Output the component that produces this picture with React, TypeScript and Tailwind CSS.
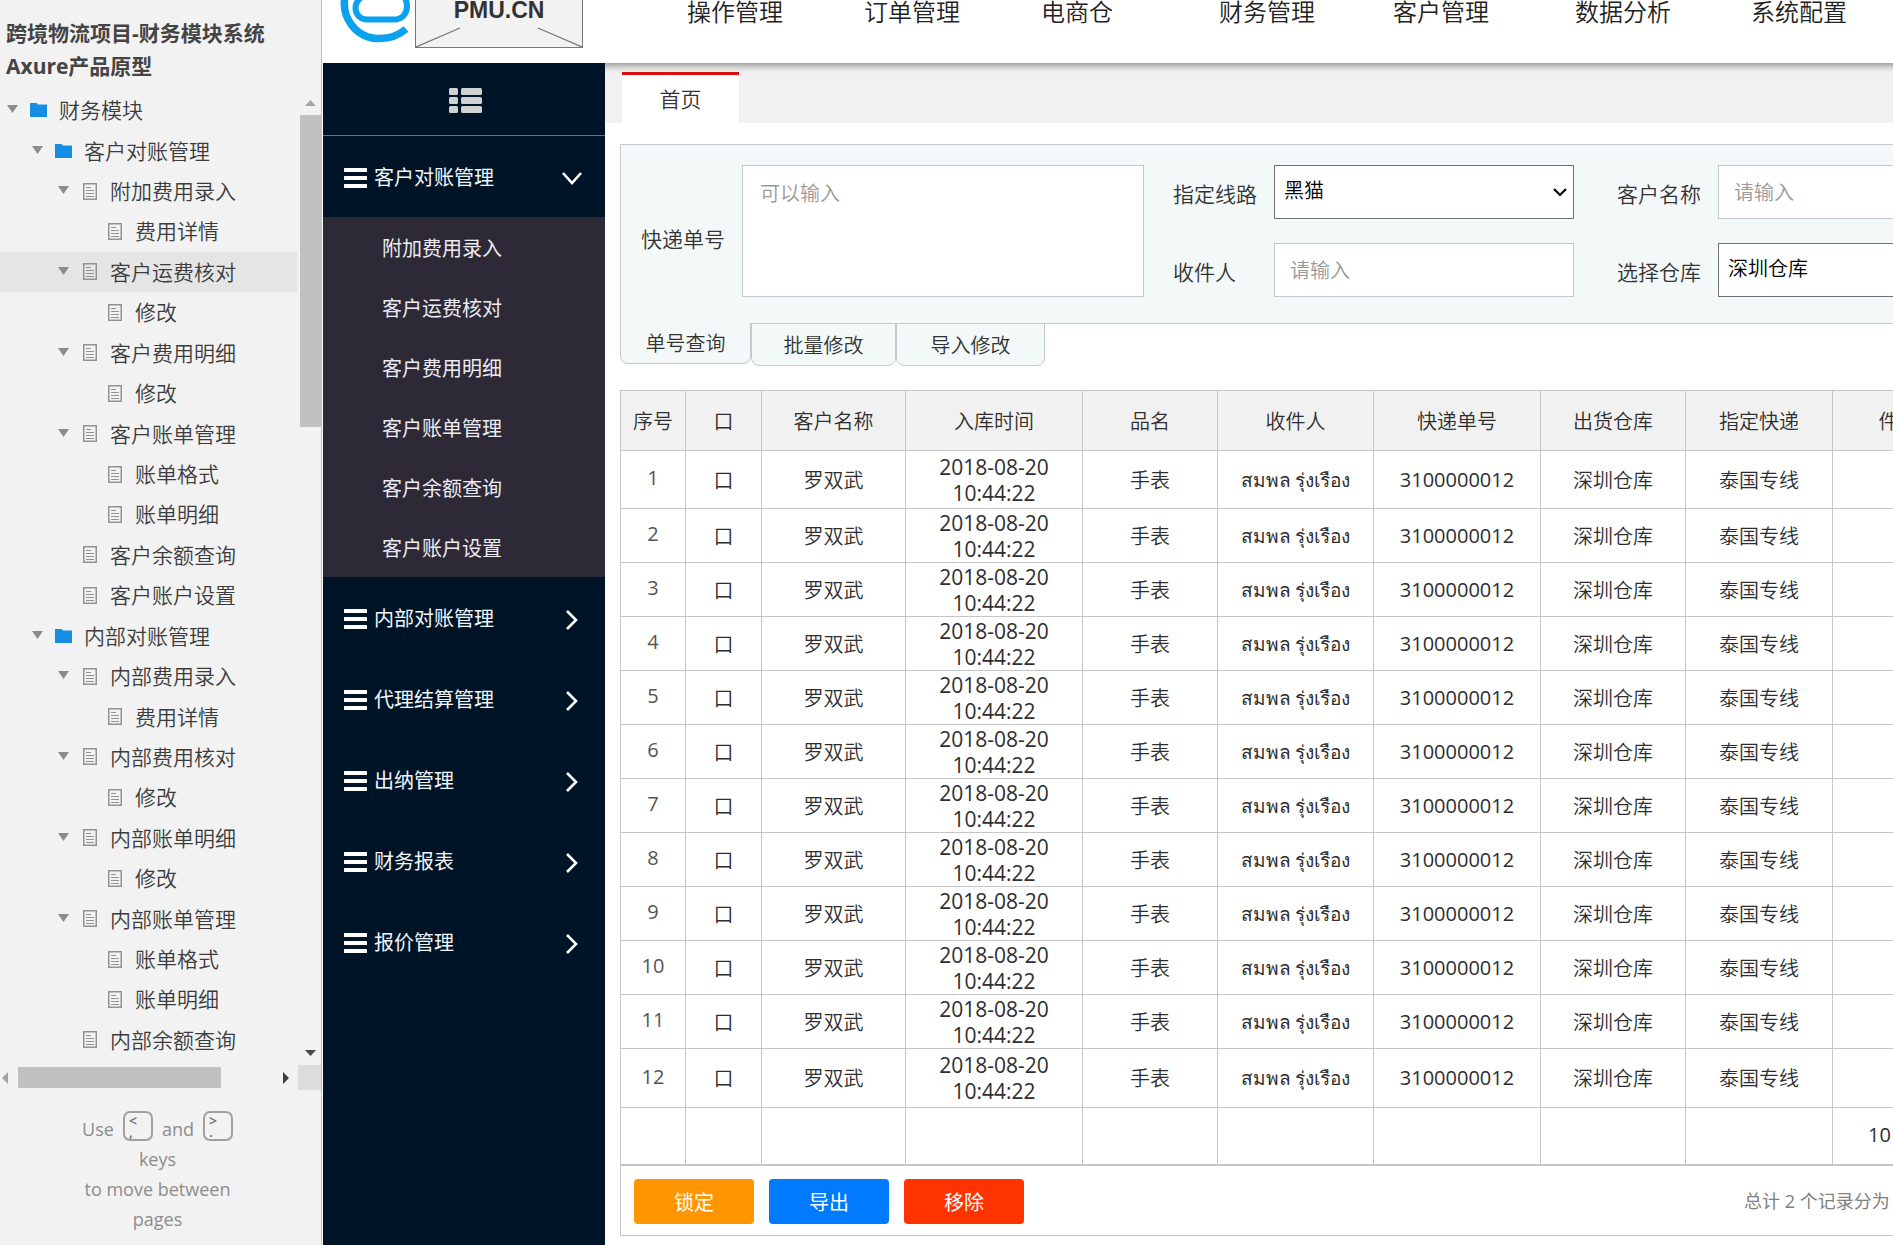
import React from "react";

type NodeKind = "folder" | "page";
type TreeNode = { level: 0 | 1 | 2 | 3; label: string; kind: NodeKind; open?: boolean; active?: boolean };

const tree: TreeNode[] = [
  { level: 0, label: "财务模块", kind: "folder", open: true },
  { level: 1, label: "客户对账管理", kind: "folder", open: true },
  { level: 2, label: "附加费用录入", kind: "page", open: true },
  { level: 3, label: "费用详情", kind: "page" },
  { level: 2, label: "客户运费核对", kind: "page", open: true, active: true },
  { level: 3, label: "修改", kind: "page" },
  { level: 2, label: "客户费用明细", kind: "page", open: true },
  { level: 3, label: "修改", kind: "page" },
  { level: 2, label: "客户账单管理", kind: "page", open: true },
  { level: 3, label: "账单格式", kind: "page" },
  { level: 3, label: "账单明细", kind: "page" },
  { level: 2, label: "客户余额查询", kind: "page" },
  { level: 2, label: "客户账户设置", kind: "page" },
  { level: 1, label: "内部对账管理", kind: "folder", open: true },
  { level: 2, label: "内部费用录入", kind: "page", open: true },
  { level: 3, label: "费用详情", kind: "page" },
  { level: 2, label: "内部费用核对", kind: "page", open: true },
  { level: 3, label: "修改", kind: "page" },
  { level: 2, label: "内部账单明细", kind: "page", open: true },
  { level: 3, label: "修改", kind: "page" },
  { level: 2, label: "内部账单管理", kind: "page", open: true },
  { level: 3, label: "账单格式", kind: "page" },
  { level: 3, label: "账单明细", kind: "page" },
  { level: 2, label: "内部余额查询", kind: "page" },
];

const indents = ["pl-[7px]", "pl-[32px]", "pl-[58px]", "pl-[83px]"];

const subItems = ["附加费用录入", "客户运费核对", "客户费用明细", "客户账单管理", "客户余额查询", "客户账户设置"];
const groups = ["内部对账管理", "代理结算管理", "出纳管理", "财务报表", "报价管理"];
const topNav = ["操作管理", "订单管理", "电商仓", "财务管理", "客户管理", "数据分析", "系统配置"];

const columns = [
  { label: "序号", width: "w-[65px]" },
  { label: "口", width: "w-[76px]" },
  { label: "客户名称", width: "w-[144px]" },
  { label: "入库时间", width: "w-[177px]" },
  { label: "品名", width: "w-[135px]" },
  { label: "收件人", width: "w-[156px]" },
  { label: "快递单号", width: "w-[167px]" },
  { label: "出货仓库", width: "w-[145px]" },
  { label: "指定快递", width: "w-[147px]" },
  { label: "件数", width: "w-[132px]" },
];

function FolderIcon() {
  return (
    <svg width="17" height="14" viewBox="0 0 17 14" fill="#158de3" aria-hidden="true">
      <path d="M0 0h6.5l1.5 1.5h9V14H0z" />
    </svg>
  );
}

function PageIcon() {
  return (
    <svg width="14" height="17" viewBox="0 0 14 17" fill="none" stroke="#929292" aria-hidden="true">
      <rect x="0.75" y="0.75" width="12.5" height="15.5" strokeWidth="1.5" />
      <path d="M3 4.500h5M3 7.500h8M3 10.500h8M3 13.500h8" strokeWidth="1" />
    </svg>
  );
}

function ListIcon() {
  return (
    <svg width="33" height="25" viewBox="0 0 33 25" fill="#d0d1d3" aria-hidden="true">
      {[0, 9, 18].map((y) => (
        <g key={y}>
          <rect x="0" y={y} width="9" height="7" rx="1.500" />
          <rect x="12" y={y} width="21" height="7" rx="1.500" />
        </g>
      ))}
    </svg>
  );
}

function Bars() {
  return (
    <svg width="23" height="20" viewBox="0 0 23 20" fill="#fff" aria-hidden="true">
      <rect y="0" width="23" height="4" rx="0.5" />
      <rect y="8" width="23" height="4" rx="0.5" />
      <rect y="16" width="23" height="4" rx="0.5" />
    </svg>
  );
}

function Chevron({ down }: { down?: boolean }) {
  return (
    <svg width="22" height="22" viewBox="0 0 22 22" fill="none" stroke="#fff" strokeWidth="2.600" aria-hidden="true">
      <path d={down ? "M2 6l9 10 9-10" : "M6 2l9 9-9 9"} />
    </svg>
  );
}

function Key({ top, bottom }: { top: string; bottom: string }) {
  return (
    <kbd className="mb-[3px] flex h-[30px] w-[30px] flex-col rounded-[7px] border-2 border-[#a0a0a0] pt-[2px] pl-1 text-left font-['Open_Sans',sans-serif] text-[14px] leading-[11px] font-semibold text-[#6f6f6f]">
      <span>{top}</span>
      <span>{bottom}</span>
    </kbd>
  );
}

function Sidebar() {
  return (
    <aside className="flex w-[322px] shrink-0 flex-col border-r border-[#b9c0c4] bg-[#f2f2f2] text-[#3c3c3c]">
      <h1 className="h-[90px] shrink-0 pt-[17px] pl-[6px] text-[21px] leading-[33px] font-bold text-[#444]">
        跨境物流项目-财务模块系统
        <br />
        Axure产品原型
      </h1>
      <div className="flex min-h-0 flex-1">
        <ul className="flex min-w-0 flex-1 flex-col pb-[5px]">
          {tree.map((n, i) => (
            <li key={i} className={`min-h-0 flex-1 ${n.active ? "bg-[#e5e5e5]" : ""}`}>
              <a href="#" className={`flex h-full items-center text-[21px] leading-[28px] font-[350] whitespace-nowrap ${indents[n.level]}`}>
                <span className="w-[11px] pb-[2px]">
                  {n.open && (
                    <svg width="11" height="8" viewBox="0 0 11 8" fill="#8c8c8c" aria-hidden="true">
                      <path d="M0 0h11L5.500 8z" />
                    </svg>
                  )}
                </span>
                <span className="mx-3 flex w-[17px] justify-center">{n.kind === "folder" ? <FolderIcon /> : <PageIcon />}</span>
                {n.label}
              </a>
            </li>
          ))}
        </ul>
        <div className="flex w-6 flex-col items-center pt-[10px] pb-[9px] pl-[3px]">
          <svg width="11" height="6" viewBox="0 0 11 6" fill="#a3a3a3" aria-hidden="true">
            <path d="M0 6h11L5.500 0z" />
          </svg>
          <div className="mt-[9px] h-[312px] w-full bg-[#c1c1c1]" />
          <svg className="mt-auto" width="11" height="6" viewBox="0 0 11 6" fill="#4a4a4a" aria-hidden="true">
            <path d="M0 0h11L5.500 6z" />
          </svg>
        </div>
      </div>
      <div className="flex h-[25px] shrink-0 items-center">
        <svg className="ml-[2px]" width="6" height="12" viewBox="0 0 6 12" fill="#a3a3a3" aria-hidden="true">
          <path d="M6 0v12L0 6z" />
        </svg>
        <div className="ml-[10px] h-[21px] w-[203px] bg-[#c1c1c1]" />
        <svg className="ml-auto" width="6" height="12" viewBox="0 0 6 12" fill="#3c3c3c" aria-hidden="true">
          <path d="M0 0v12l6-6z" />
        </svg>
        <div className="ml-[9px] h-full w-[23px] bg-[#dcdcdc]" />
      </div>
      <div className="h-[155px] shrink-0 pt-[21px] pr-[6px] text-center text-[18px] leading-[30px] text-[#8c8c8c]">
        <p className="flex items-end justify-center gap-[9px]">
          <span>Use</span>
          <Key top="<" bottom="," />
          <span>and</span>
          <Key top=">" bottom="." />
        </p>
        <p>keys</p>
        <p>to move between</p>
        <p>pages</p>
      </div>
    </aside>
  );
}

function ModuleNav() {
  return (
    <nav className="flex w-[282px] shrink-0 flex-col bg-[#001428] text-[20px] leading-[28px] text-[#f2f6fa]">
      <button type="button" aria-label="菜单" className="flex h-[73px] w-full items-center justify-center border-b border-[#66727e] pt-[2px] pl-[3px]">
        <ListIcon />
      </button>
      <button type="button" className="flex h-[81px] items-center pt-[2px] pr-[22px] pl-[21px]">
        <Bars />
        <span className="ml-[7px] flex-1 text-left">客户对账管理</span>
        <Chevron down />
      </button>
      <ul className="bg-[#2e2937] text-[#ececf0]">
        {subItems.map((s) => (
          <li key={s}>
            <a href="#" className="flex h-[60px] items-center pt-[3px] pl-[59px]">
              {s}
            </a>
          </li>
        ))}
      </ul>
      {groups.map((g) => (
        <button key={g} type="button" className="flex h-[81px] items-center pt-[2px] pr-[22px] pl-[21px]">
          <Bars />
          <span className="ml-[7px] flex-1 text-left">{g}</span>
          <span className="pt-[2px]">
            <Chevron />
          </span>
        </button>
      ))}
    </nav>
  );
}

function Header() {
  return (
    <header className="flex h-[63px] shrink-0 bg-white">
      <svg className="shrink-0" width="92" height="48" viewBox="323 0 92 48" fill="none" stroke="#0aa2ee" aria-hidden="true">
        <path d="M346 -8C339 17 356 38.500 380 38.500C390 38.500 399 35 406 29" strokeWidth="7.500" />
        <path d="M372 -6C361 -5 355.500 1 355.500 8C355.500 15 361 19.500 367 19.500H394C402 19.500 407 14 407 6C407 1 405 -3 401 -6" strokeWidth="6" />
      </svg>
      <div className="relative h-[48px] w-[168px] shrink-0 border border-t-0 border-[#777] bg-[#f2f2f2] text-center">
        <svg className="absolute inset-0" width="166" height="47" viewBox="0 0 166 47" stroke="#777" strokeWidth="1.300" aria-hidden="true">
          <path d="M0 47L44 28M166 47L122 28" />
        </svg>
        <span className="relative -top-[5px] font-['Liberation_Sans',sans-serif] text-[23px] leading-[30px] font-bold text-[#333]">PMU.CN</span>
      </div>
      <ul className="ml-[104px] grid grid-cols-[177px_177px_178px_174px_182px_176px_140px] text-[24px] leading-[23px] font-[350] text-[#222]">
        {topNav.map((t) => (
          <li key={t}>
            <a href="#">{t}</a>
          </li>
        ))}
      </ul>
    </header>
  );
}

const fieldBox = "h-[54px] border bg-white text-[20px] font-[350]";

function SelectField({ id, value }: { id: string; value: string }) {
  return (
    <div className="relative w-full">
      <select id={id} defaultValue={value} className={`${fieldBox} w-full appearance-none border-[#707070] pb-[2px] pl-[9px] text-black`}>
        <option>{value}</option>
      </select>
      <svg className="pointer-events-none absolute top-[23px] right-[7px]" width="14" height="9" viewBox="0 0 14 9" fill="none" stroke="#000" strokeWidth="2.200" aria-hidden="true">
        <path d="M1 1l6 6 6-6" />
      </svg>
    </div>
  );
}

function Filters() {
  const input = `${fieldBox} border-[#c4c8cb] pl-[15px] text-black placeholder:text-[#999]`;
  return (
    <section>
      <form className="grid h-[180px] w-full grid-cols-[101px_402px_29px_101px_300px_43px_101px_232px] gap-y-6 border border-[#c4cacb] bg-[#f3f9f9] pt-5 pb-[26px] pl-5 text-[21px] leading-[28px] font-[350] text-[#333]">
        <label htmlFor="waybill" className="row-span-2 self-center pt-4">
          快递单号
        </label>
        <textarea
          id="waybill"
          placeholder="可以输入"
          className="row-span-2 h-[132px] resize-none border border-[#c4c8cb] bg-white px-[17px] pt-[14px] text-[20px] text-black placeholder:text-[#999]"
        />
        <span />
        <label htmlFor="route" className="self-center pt-1">
          指定线路
        </label>
        <SelectField id="route" value="黑猫" />
        <span />
        <label htmlFor="customer" className="self-center pt-1">
          客户名称
        </label>
        <input id="customer" placeholder="请输入" className={input} />
        <span />
        <label htmlFor="receiver" className="self-center pt-1">
          收件人
        </label>
        <input id="receiver" placeholder="请输入" className={input} />
        <span />
        <label htmlFor="warehouse" className="self-center pt-1">
          选择仓库
        </label>
        <SelectField id="warehouse" value="深圳仓库" />
      </form>
      <div className="relative -mt-px flex h-[43px] items-start text-[20px] leading-[28px] font-[350] text-[#333]">
        <button type="button" className="h-[41px] w-[131px] rounded-b-lg border border-t-0 border-[#c4cacb] bg-[#f3f9f9] pt-[2px]">
          单号查询
        </button>
        <button type="button" className="h-[43px] w-[145px] rounded-b-lg border border-[#c4cacb] bg-[#f3f9f9] pt-[3px]">
          批量修改
        </button>
        <button type="button" className="h-[43px] w-[149px] rounded-b-lg border border-[#c4cacb] bg-[#f3f9f9] pt-[3px]">
          导入修改
        </button>
      </div>
    </section>
  );
}

function OrderTable() {
  const cell = "border border-[#c6c6c6] p-0";
  const text = `${cell} pt-[2px]`;
  const height = (i: number) => (i === 0 ? "h-[58px]" : i === 11 ? "h-[59px]" : "h-[54px]");
  return (
    <table className="mt-6 w-[1344px] table-fixed border-collapse text-center text-[20px] leading-[26px] font-[350] text-[#2e2e2e]">
      <thead>
        <tr className="h-[60px] bg-[#f1f1f1]">
          {columns.map((c) => (
            <th key={c.label} scope="col" className={`${text} ${c.width} font-[350]`}>
              {c.label}
            </th>
          ))}
        </tr>
      </thead>
      <tbody>
        {Array.from({ length: 12 }, (_, i) => (
          <tr key={i} className={height(i)}>
            <td className={`${cell} pb-[3px] font-normal text-[#555]`}>{i + 1}</td>
            <td className={text}>口</td>
            <td className={text}>罗双武</td>
            <td className={`${cell} text-[21px] leading-[26px] font-normal`}>
              2018-08-20
              <br />
              10:44:22
            </td>
            <td className={text}>手表</td>
            <td className={`${cell} text-[19px] leading-[26px] font-normal`}>สมพล รุ่งเรือง</td>
            <td className={`${cell} font-normal`}>3100000012</td>
            <td className={text}>深圳仓库</td>
            <td className={text}>泰国专线</td>
            <td className={cell} />
          </tr>
        ))}
        <tr className="h-[57px]">
          {columns.slice(0, 9).map((c) => (
            <td key={c.label} className={cell} />
          ))}
          <td className={`${cell} pb-[2px] pl-[35px] text-left font-normal`}>10</td>
        </tr>
      </tbody>
    </table>
  );
}

function Actions() {
  const base = "h-[45px] w-[120px] rounded-[4px] pt-[2px] text-[20px] text-white";
  return (
    <div className="flex h-[71px] w-[1344px] items-start gap-[15px] border border-[#c6c6c6] pt-[13px] pl-[13px]">
      <button type="button" className={`${base} bg-[#ff9500]`}>
        锁定
      </button>
      <button type="button" className={`${base} bg-[#007aff]`}>
        导出
      </button>
      <button type="button" className={`${base} bg-[#ff3300]`}>
        移除
      </button>
      <p className="ml-auto w-[219px] text-[18px] leading-[45px] text-[#808080]">总计 2 个记录分为</p>
    </div>
  );
}

export default function App() {
  return (
    <div className="flex h-screen w-full overflow-hidden bg-white font-['Open_Sans','Noto_Sans_CJK_SC',sans-serif]">
      <Sidebar />
      <div className="ml-px flex min-w-0 flex-1 flex-col overflow-hidden">
        <Header />
        <div className="flex min-h-0 flex-1">
          <ModuleNav />
          <main className="min-w-0 flex-1 overflow-hidden">
            <div className="flex h-[60px] items-end bg-[#f1f1f1] bg-[linear-gradient(to_bottom,#a3a3a3_0px,#d0d0d0_4px,#ececec_8px,#f1f1f1_11px)] pl-[17px]">
              <button type="button" className="h-[51px] w-[117px] border-t-[3px] border-[#dd0d0d] bg-white pt-[2px] text-[21px] font-[350] text-[#333]">
                首页
              </button>
            </div>
            <div className="mt-[21px] ml-[15px] w-[1344px]">
              <Filters />
              <OrderTable />
              <Actions />
            </div>
          </main>
        </div>
      </div>
    </div>
  );
}
